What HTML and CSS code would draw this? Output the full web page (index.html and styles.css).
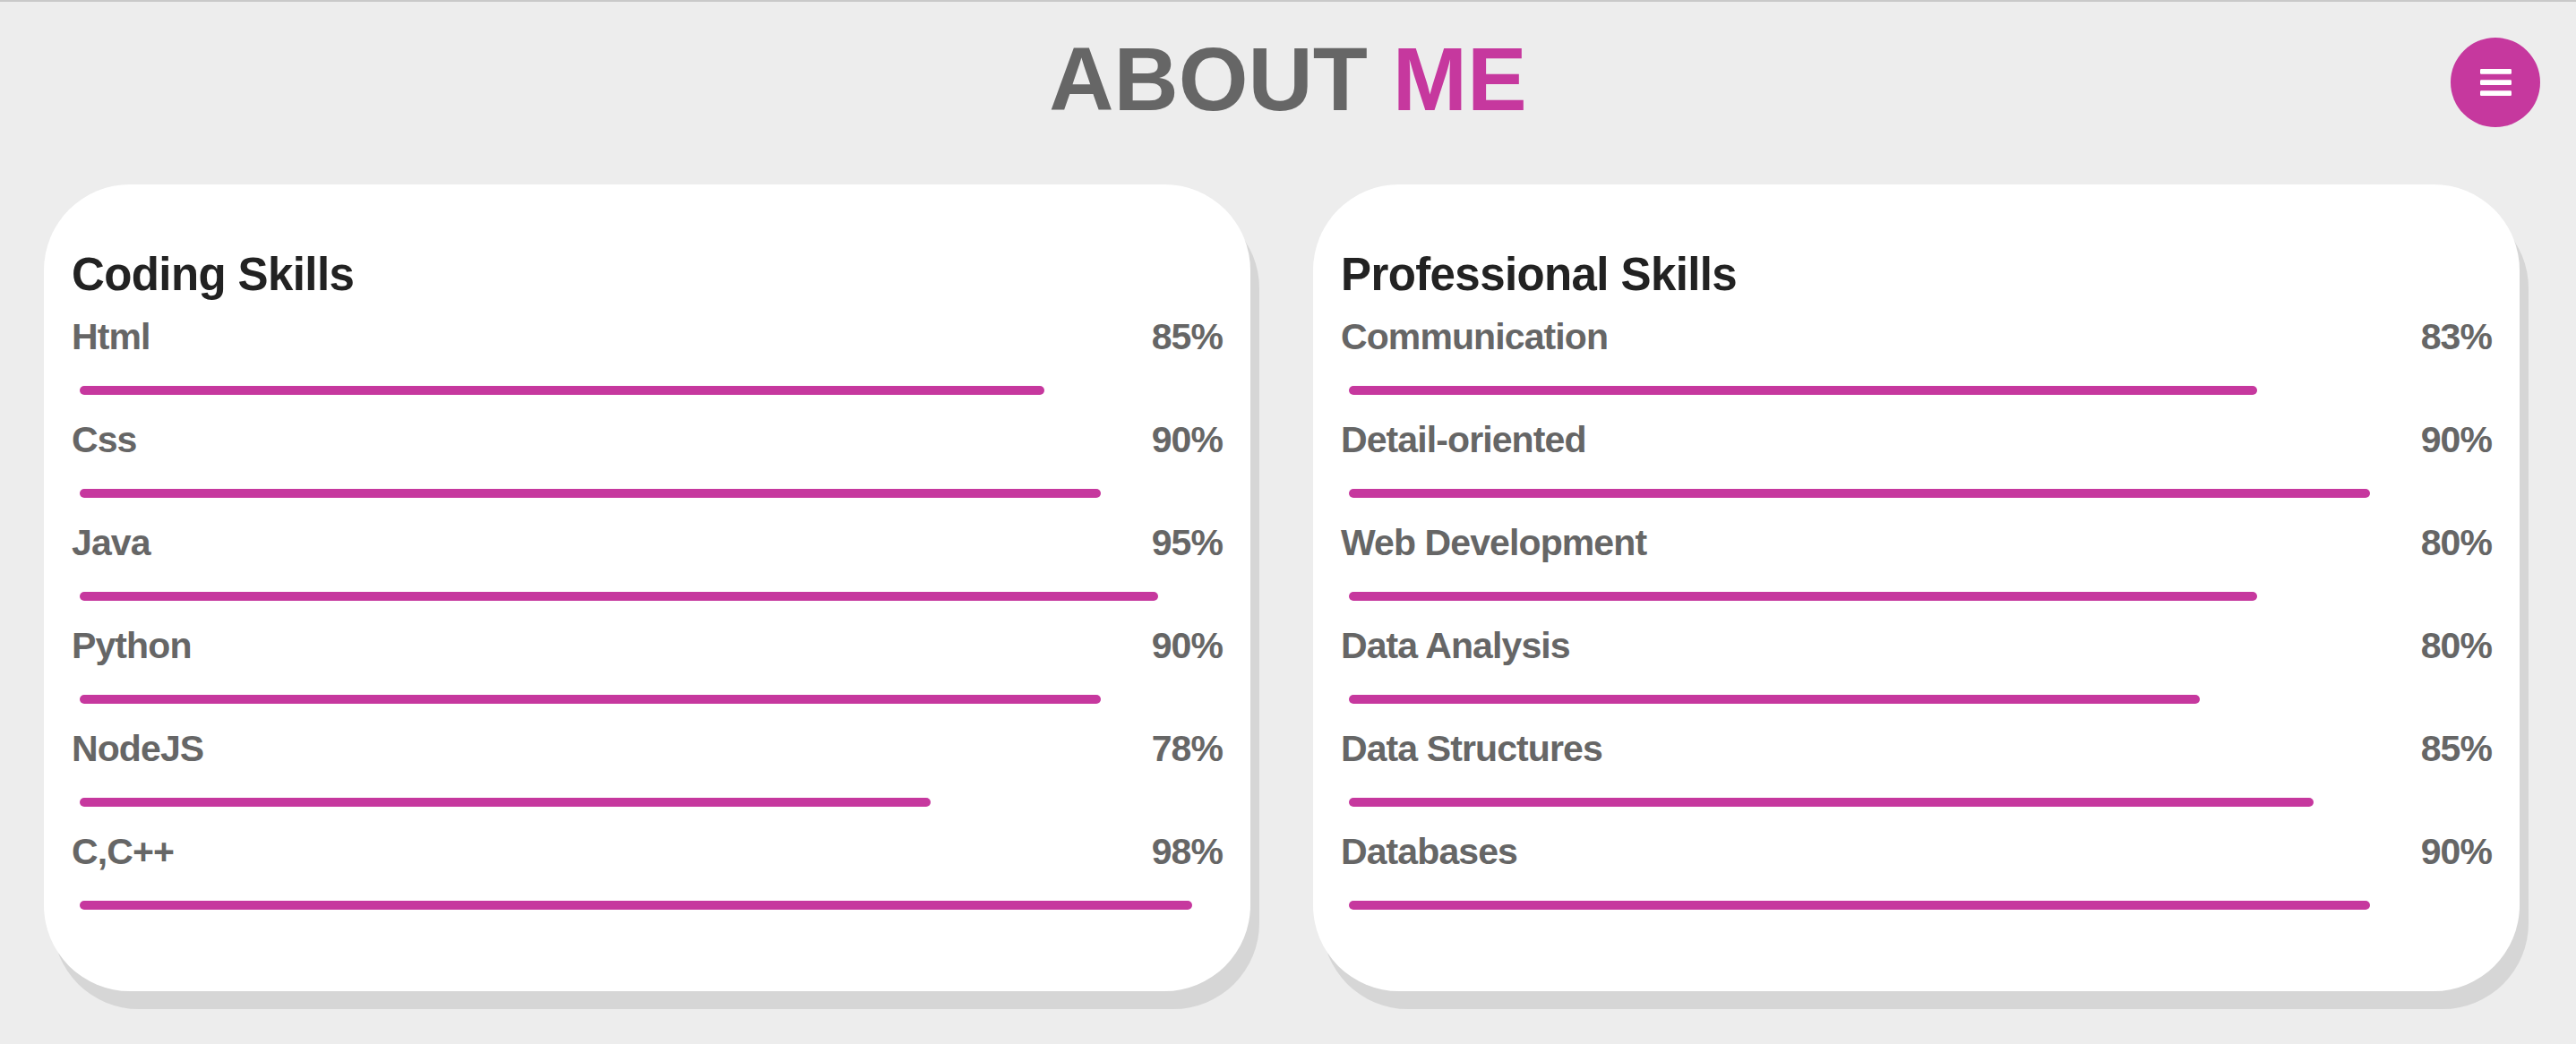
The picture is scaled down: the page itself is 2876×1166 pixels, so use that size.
FILE: index.html
```html
<!DOCTYPE html>
<html lang="en">
<head>
<meta charset="utf-8">
<title>About Me</title>
<link rel="stylesheet" href="styles.css">
</head>
<body>
<header class="header">
  <h1 class="title"><span class="title-main">ABOUT</span> <span class="title-accent">ME</span></h1>
  <button class="menu-btn" aria-label="Menu">
    <svg class="menu-icon" viewBox="0 0 35 30" width="35" height="30">
      <rect x="0" y="0" width="35" height="5.7" rx="1.2" fill="#fff"/>
      <rect x="0" y="12.2" width="35" height="5.7" rx="1.2" fill="#fff"/>
      <rect x="0" y="24.3" width="35" height="5.7" rx="1.2" fill="#fff"/>
    </svg>
  </button>
</header>
<main class="skills">
  <section class="card">
    <h2 class="card-title">Coding Skills</h2>
    <div class="skill"><div class="skill-head"><span>Html</span><span>85%</span></div><div class="track"><div class="fill" style="width:85%"></div></div></div>
    <div class="skill"><div class="skill-head"><span>Css</span><span>90%</span></div><div class="track"><div class="fill" style="width:90%"></div></div></div>
    <div class="skill"><div class="skill-head"><span>Java</span><span>95%</span></div><div class="track"><div class="fill" style="width:95%"></div></div></div>
    <div class="skill"><div class="skill-head"><span>Python</span><span>90%</span></div><div class="track"><div class="fill" style="width:90%"></div></div></div>
    <div class="skill"><div class="skill-head"><span>NodeJS</span><span>78%</span></div><div class="track"><div class="fill" style="width:75%"></div></div></div>
    <div class="skill"><div class="skill-head"><span>C,C++</span><span>98%</span></div><div class="track"><div class="fill" style="width:98%"></div></div></div>
  </section>
  <section class="card">
    <h2 class="card-title">Professional Skills</h2>
    <div class="skill"><div class="skill-head"><span>Communication</span><span>83%</span></div><div class="track"><div class="fill" style="width:80%"></div></div></div>
    <div class="skill"><div class="skill-head"><span>Detail-oriented</span><span>90%</span></div><div class="track"><div class="fill" style="width:90%"></div></div></div>
    <div class="skill"><div class="skill-head"><span>Web Development</span><span>80%</span></div><div class="track"><div class="fill" style="width:80%"></div></div></div>
    <div class="skill"><div class="skill-head"><span>Data Analysis</span><span>80%</span></div><div class="track"><div class="fill" style="width:75%"></div></div></div>
    <div class="skill"><div class="skill-head"><span>Data Structures</span><span>85%</span></div><div class="track"><div class="fill" style="width:85%"></div></div></div>
    <div class="skill"><div class="skill-head"><span>Databases</span><span>90%</span></div><div class="track"><div class="fill" style="width:90%"></div></div></div>
  </section>
</main>
</body>
</html>
```
FILE: styles.css
```css
html, body {
  margin: 0;
  padding: 0;
}
body {
  background: #ededed;
  border-top: 2px solid #c9c9c9;
  font-family: "Liberation Sans", Arial, Helvetica, sans-serif;
  min-height: 1164px;
}
.header {
  position: relative;
  display: flex;
  justify-content: center;
  padding: 31px 0 0 0;
  height: 173px;
  box-sizing: border-box;
}
.title {
  margin: 0;
  font-size: 100px;
  line-height: 110px;
  font-weight: 700;
  white-space: nowrap;
}
.title-main {
  color: #666666;
}
.title-accent {
  color: #c6389e;
}
.menu-btn {
  position: absolute;
  top: 40px;
  right: 40px;
  width: 100px;
  height: 100px;
  border: none;
  border-radius: 50%;
  background: #c6389e;
  padding: 0;
  display: flex;
  align-items: center;
  justify-content: center;
}
.menu-icon {
  display: block;
}
.skills {
  display: flex;
  gap: 70px;
  padding: 31px 63px 0 49px;
}
.card {
  flex: 1;
  background: #ffffff;
  border-radius: 96px;
  box-shadow: 10px 20px 0 #d6d6d6;
  padding: 71px 31px 65px 31px;
}
.card-title {
  margin: 0 0 15px 0;
  font-size: 51px;
  line-height: 60px;
  font-weight: 700;
  color: #222222;
  letter-spacing: -0.6px;
}
.skill {
  margin-bottom: 26px;
}
.skill-head {
  display: flex;
  justify-content: space-between;
  font-size: 41px;
  line-height: 48px;
  font-weight: 700;
  color: #666666;
  letter-spacing: -0.9px;
}
.track {
  margin: 31px 9px 0 9px;
  height: 10px;
}
.fill {
  height: 10px;
  background: #c6389e;
  border-radius: 5px;
}
```
